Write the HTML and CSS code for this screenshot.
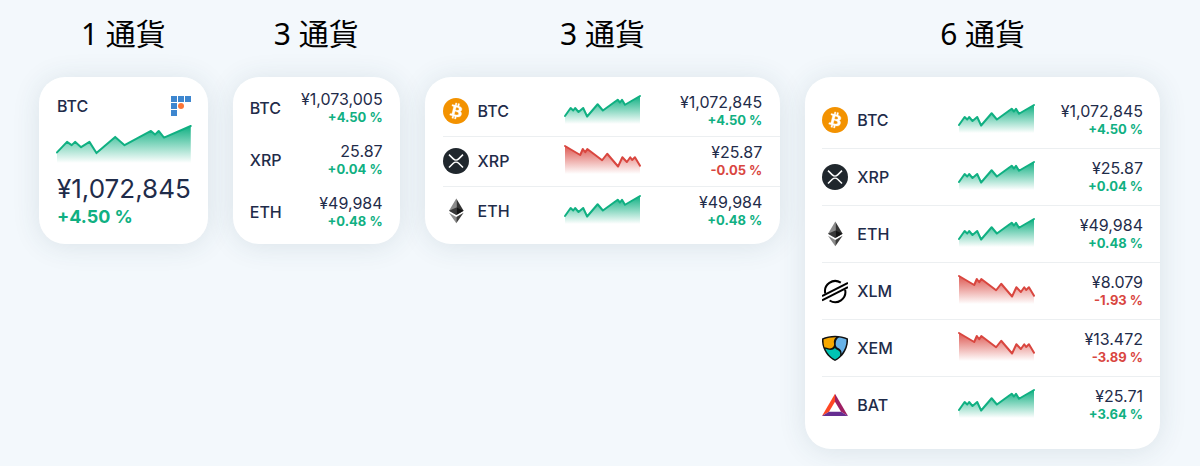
FILE: index.html
```
<!DOCTYPE html>
<html lang="ja">
<head>
    <meta charset="UTF-8">
    <meta name="viewport" content="width=device-width, initial-scale=1.0">
    <title>通貨ウィジェット</title>
    <link rel="stylesheet" href="styles.css">
</head>
<body>
    <!-- shared icons and charts -->
    <svg class="defs" width="0" height="0" aria-hidden="true">
        <defs>
            <linearGradient id="fill-up" x1="0" y1="0" x2="0" y2="1">
                <stop offset="0" stop-color="#10b082" />
                <stop offset="1" stop-color="#10b082" stop-opacity="0" />
            </linearGradient>
            <linearGradient id="fill-down" x1="0" y1="0" x2="0" y2="1">
                <stop offset="0" stop-color="#d9463f" stop-opacity="0.9" />
                <stop offset="1" stop-color="#d9463f" stop-opacity="0" />
            </linearGradient>
        </defs>
        <symbol id="chart-up" viewBox="0 0 400 112" preserveAspectRatio="none" overflow="visible">
            <path fill="url(#fill-up)" d="M0 80 30 48 44 58 54 48 72 64 97 48 118 82 174 33 202 58 281 15 293 26 304 15 320 35 400 0V112H0z" />
            <path class="line up" d="M0 80 30 48 44 58 54 48 72 64 97 48 118 82 174 33 202 58 281 15 293 26 304 15 320 35 400 0" />
        </symbol>
        <symbol id="chart-down" viewBox="0 0 400 112" preserveAspectRatio="none" overflow="visible">
            <path fill="url(#fill-down)" d="M0 0 81 36 95 12 108 25 119 12 198 57 225 31 283 82 306 45 330 64 348 45 358 56 373 45 400 79V112H0z" />
            <path class="line down" d="M0 0 81 36 95 12 108 25 119 12 198 57 225 31 283 82 306 45 330 64 348 45 358 56 373 45 400 79" />
        </symbol>
        <symbol id="btc" viewBox="0 0 32 32">
            <circle cx="16" cy="16" r="16" fill="#f39200" />
            <path fill="#fff" stroke="#fff" stroke-width="0.4" d="M23.189 14.02c.314-2.096-1.283-3.223-3.465-3.975l.708-2.84-1.728-.43-.69 2.765c-.454-.114-.92-.22-1.385-.326l.695-2.783L15.596 6l-.708 2.839c-.376-.086-.746-.17-1.104-.26l.002-.009-2.384-.595-.46 1.846s1.283.294 1.256.312c.7.175.826.638.805 1.006l-.806 3.235c.048.012.11.03.18.057l-.183-.045-1.13 4.532c-.086.212-.303.531-.793.41.018.025-1.256-.313-1.256-.313l-.858 1.978 2.25.561c.418.105.828.215 1.231.318l-.715 2.872 1.727.43.708-2.84c.472.127.93.245 1.378.357l-.706 2.828 1.728.43.715-2.866c2.948.558 5.164.333 6.097-2.333.752-2.146-.037-3.385-1.588-4.192 1.13-.26 1.98-1.003 2.207-2.538zm-3.95 5.538c-.533 2.147-4.148.986-5.32.695l.95-3.805c1.172.293 4.929.872 4.37 3.11zm.535-5.569c-.487 1.953-3.495.96-4.47.717l.86-3.45c.975.243 4.118.696 3.61 2.733z" />
        </symbol>
        <symbol id="xrp" viewBox="0 0 32 32">
            <circle cx="16" cy="16" r="16" fill="#20272d" />
            <g fill="none" stroke="#fff" stroke-width="1.9">
                <path d="M7.4 8.2l5.3 5.2a4.7 4.7 0 0 0 6.6 0l5.3-5.2" />
                <path d="M7.4 24l5.3-5.2a4.7 4.7 0 0 1 6.6 0l5.3 5.2" />
            </g>
        </symbol>
        <symbol id="eth" viewBox="0 0 26 26">
            <path fill="#343434" d="M13.3.5l7.3 12.2-7.3 4.3z" />
            <path fill="#8c8c8c" d="M13.3.5L6 12.7l7.3 4.3z" />
            <path fill="#141414" d="M13.3 9.4l7.3 3.3-7.3 4.3z" />
            <path fill="#393939" d="M13.3 9.4L6 12.7l7.3 4.3z" />
            <path fill="#8c8c8c" d="M6 14.7l7.3 4.3v6.3z" />
            <path fill="#3c3c3b" d="M20.6 14.7L13.3 19v6.3z" />
        </symbol>
        <symbol id="xlm" viewBox="0 0 26 26">
            <g fill="none" stroke="#000" stroke-width="2">
                <path d="M3.300 15.600A10.200 10.200 0 0 1 18.800 4.700" />
                <path d="M23.100 11.700A10.200 10.200 0 0 1 7.600 22.500" />
                <path d="M0 18.100L26 4.800" />
                <path d="M0 22.400L26 9.100" />
            </g>
        </symbol>
        <symbol id="xem" viewBox="0 0 26 26">
            <path fill="#111" d="M13 .7c4.500 0 9 1 13 2.800.6 9-4.500 18.300-13 22.500C4.500 21.800-.6 12.500 0 3.500 4 1.700 8.500.7 13 .7z" />
            <path fill="#f7a800" d="M1.500 4.600C5.300 3 9.500 2.200 14.200 2.300c-2.200 1.600-2.700 4-2.200 6.300.5 2.800-1.500 4.800-4 4.800-2.500 0-4.200-1.400-5.600-1.200C1.700 9.800 1.400 7.200 1.500 4.600z" />
            <path fill="#67b2e8" d="M17 2.600c2.700.3 5 .9 7.500 2 .2 5.400-1.700 10.200-4.900 14.200.1-2.800-1-4.600-3.400-5.700-2.300-1.200-2.800-3.300-2.400-5.700.3-2.100 1.300-3.900 3.200-4.800z" />
            <path fill="#00c4b3" d="M3.300 13.800c1.600.3 3.200 1.100 5.300 1.100 1.900 0 3.300-.7 4.300-1.900.7.900 1.600 1.500 2.700 2 2.600 1.300 3.200 3.400 2.200 6A21 21 0 0 1 13 24.500C8.700 22.100 5.200 18.400 3.300 13.800z" />
        </symbol>
        <symbol id="bat" viewBox="0 0 26 26">
            <path fill="#ff4724" d="M13 1.700v8L7 19.700 0 24z" />
            <path fill="#9e1f63" d="M13 1.700v8l6 10 7 4.300z" />
            <path fill="#662d91" d="M0 24l7-4.300h12l7 4.300z" />
        </symbol>
    </svg>

    <main class="widgets">
        <section>
            <h2>1 通貨</h2>
            <div class="card single">
                <div class="single-head">
                    <span class="name">BTC</span>
                    <svg class="brand" viewBox="0 0 20 20" aria-hidden="true">
                        <path fill="#3d86cf" d="M0 0h6v6H0zM7 0h6v6H7zM14 0h6v6h-6zM0 7h6v6H0zM0 14h6v6H0z" />
                        <circle cx="10" cy="10" r="3" fill="#fa7537" />
                    </svg>
                </div>
                <svg class="chart"><use href="#chart-up" /></svg>
                <div class="price">¥1,072,845</div>
                <div class="change up">+4.50 %</div>
            </div>
        </section>

        <section>
            <h2>3 通貨</h2>
            <ul class="card compact">
                <li>
                    <span class="name">BTC</span>
                    <div class="value"><div class="price">¥1,073,005</div><div class="change up">+4.50 %</div></div>
                </li>
                <li>
                    <span class="name">XRP</span>
                    <div class="value"><div class="price">25.87</div><div class="change up">+0.04 %</div></div>
                </li>
                <li>
                    <span class="name">ETH</span>
                    <div class="value"><div class="price">¥49,984</div><div class="change up">+0.48 %</div></div>
                </li>
            </ul>
        </section>

        <section>
            <h2>3 通貨</h2>
            <ul class="card list">
                <li>
                    <div class="coin"><svg class="icon"><use href="#btc" /></svg><span class="name">BTC</span></div>
                    <svg class="chart"><use href="#chart-up" /></svg>
                    <div class="value"><div class="price">¥1,072,845</div><div class="change up">+4.50 %</div></div>
                </li>
                <li>
                    <div class="coin"><svg class="icon"><use href="#xrp" /></svg><span class="name">XRP</span></div>
                    <svg class="chart"><use href="#chart-down" /></svg>
                    <div class="value"><div class="price">¥25.87</div><div class="change down">-0.05 %</div></div>
                </li>
                <li>
                    <div class="coin"><svg class="icon"><use href="#eth" /></svg><span class="name">ETH</span></div>
                    <svg class="chart"><use href="#chart-up" /></svg>
                    <div class="value"><div class="price">¥49,984</div><div class="change up">+0.48 %</div></div>
                </li>
            </ul>
        </section>

        <section>
            <h2>6 通貨</h2>
            <ul class="card list large">
                <li>
                    <div class="coin"><svg class="icon"><use href="#btc" /></svg><span class="name">BTC</span></div>
                    <svg class="chart"><use href="#chart-up" /></svg>
                    <div class="value"><div class="price">¥1,072,845</div><div class="change up">+4.50 %</div></div>
                </li>
                <li>
                    <div class="coin"><svg class="icon"><use href="#xrp" /></svg><span class="name">XRP</span></div>
                    <svg class="chart"><use href="#chart-up" /></svg>
                    <div class="value"><div class="price">¥25.87</div><div class="change up">+0.04 %</div></div>
                </li>
                <li>
                    <div class="coin"><svg class="icon"><use href="#eth" /></svg><span class="name">ETH</span></div>
                    <svg class="chart"><use href="#chart-up" /></svg>
                    <div class="value"><div class="price">¥49,984</div><div class="change up">+0.48 %</div></div>
                </li>
                <li>
                    <div class="coin"><svg class="icon"><use href="#xlm" /></svg><span class="name">XLM</span></div>
                    <svg class="chart"><use href="#chart-down" /></svg>
                    <div class="value"><div class="price">¥8.079</div><div class="change down">-1.93 %</div></div>
                </li>
                <li>
                    <div class="coin"><svg class="icon"><use href="#xem" /></svg><span class="name">XEM</span></div>
                    <svg class="chart"><use href="#chart-down" /></svg>
                    <div class="value"><div class="price">¥13.472</div><div class="change down">-3.89 %</div></div>
                </li>
                <li>
                    <div class="coin"><svg class="icon"><use href="#bat" /></svg><span class="name">BAT</span></div>
                    <svg class="chart"><use href="#chart-up" /></svg>
                    <div class="value"><div class="price">¥25.71</div><div class="change up">+3.64 %</div></div>
                </li>
            </ul>
        </section>
    </main>
</body>
</html>
```
FILE: styles.css
```
* {
    box-sizing: border-box;
}

body {
    margin: 0;
    min-height: 100vh;
    background: #f3f8fc;
    color: #1f2c4a;
    font-family: 'Inter', 'Noto Sans CJK JP', sans-serif;
    font-size: 16px;
}

.defs {
    position: absolute;
}

.widgets {
    display: grid;
    grid-template-columns: 168fr 167fr 356fr 355fr;
    align-items: start;
    gap: 25px;
    padding: 12px 40px 17px 39px;
}

h2 {
    margin: 0 0 21px;
    color: #000;
    font-family: 'Noto Sans', 'Noto Sans CJK JP', sans-serif;
    font-size: 30px;
    font-weight: 400;
    line-height: 44px;
    text-align: center;
    white-space: nowrap;
}

.card {
    margin: 0;
    background: #fff;
    border-radius: 26px;
    box-shadow: 0 2px 28px rgba(40, 70, 90, 0.12);
    list-style: none;
}

.name {
    font-weight: 500;
    line-height: 20px;
}

.price {
    line-height: 18px;
}

.change {
    font-size: 13px;
    font-weight: 700;
    line-height: 18px;
}

.up {
    color: #10b082;
}

.down {
    color: #d9463f;
}

.value {
    text-align: right;
    white-space: nowrap;
}

.chart {
    display: block;
    width: 75px;
    height: 28px;
    overflow: visible;
}

.line {
    fill: none;
    stroke: currentColor;
    stroke-width: 2px;
    stroke-linejoin: round;
    stroke-linecap: round;
    vector-effect: non-scaling-stroke;
}

/* 1 coin */
.single {
    padding: 17px 17px 16px 18px;
}

.single-head {
    display: flex;
    justify-content: space-between;
    align-items: center;
    height: 24px;
}

.brand {
    width: 20px;
    height: 20px;
}

.single .chart {
    width: 100%;
    height: 37px;
    margin: 8px 0 10px;
}

.single .price {
    font-size: 26px;
    line-height: 32px;
}

.single .change {
    font-size: 18px;
    line-height: 23px;
}

/* 3 coins, small */
.compact {
    padding: 5px 17px 6px;
}

.compact li {
    display: flex;
    justify-content: space-between;
    align-items: center;
    height: 52px;
}

/* rows with icon and chart */
.list {
    padding: 10px 0 8px 18px;
}

.list li {
    display: grid;
    grid-template-columns: 1fr 75px 1fr;
    align-items: center;
    padding: 6px 18px 7px 0;
    border-bottom: 1px solid #eceff1;
}

.list li:last-child {
    border-bottom: none;
}

.list .chart {
    margin-bottom: 2px;
}

.coin {
    display: flex;
    align-items: center;
    gap: 9px;
}

.icon {
    width: 26px;
    height: 26px;
}

.large {
    padding: 15px 0 16px 17px;
}

.large li {
    grid-template-columns: 5fr 75px 4fr;
    padding: 10px 17px 10px 0;
}
```
